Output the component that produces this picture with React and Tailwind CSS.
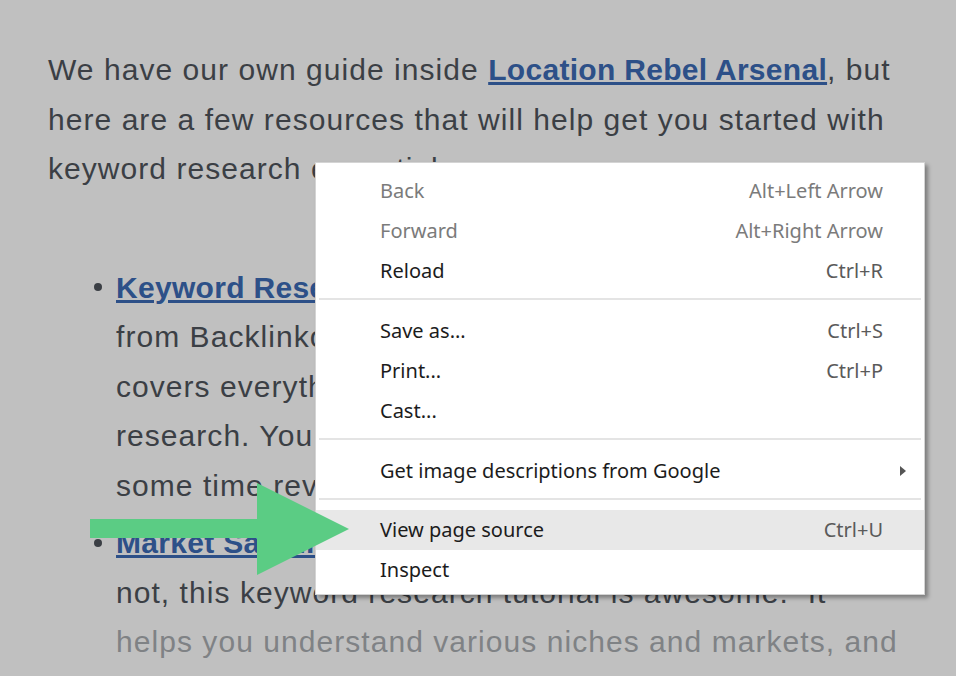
import React from "react";

const body = { fontFamily: '"Liberation Sans", Arial, sans-serif' };
const menuFont = { fontFamily: '"Noto Sans", "Open Sans", sans-serif' };

function Row({ label, shortcut, disabled, highlight, submenu }) {
  return (
    <div
      className={`flex items-center h-[40px] pl-[64px] pr-[41px] ${highlight ? "bg-[#e8e8e8]" : ""}`}
    >
      <span className={`flex-1 ${disabled ? "text-[#7b7b7b]" : "text-[#1c1c1c]"}`}>{label}</span>
      {shortcut && (
        <span className={disabled ? "text-[#7b7b7b]" : "text-[#5a5a5a]"}>{shortcut}</span>
      )}
      {submenu && (
        <svg width="8" height="12" viewBox="0 0 8 12" className="mr-[-24px] ml-2">
          <path d="M1 1 L7 6 L1 11 Z" fill="#555" />
        </svg>
      )}
    </div>
  );
}

function Sep({ h }) {
  return (
    <div className={`${h} flex flex-col`}>
      <div className="mt-[7px] mx-[3px] h-[2px] bg-[#e4e4e4]" />
    </div>
  );
}

function Bullet() {
  return (
    <div className="w-[68px] h-[49.5px] flex items-center justify-end pr-[14px] shrink-0">
      <div className="w-[8px] h-[8px] rounded-full bg-[#3b3f45]" />
    </div>
  );
}

export default function App() {
  return (
    <div className="relative w-[956px] h-[676px] bg-[#c0c0c0] overflow-hidden" style={body}>
      <div className="pl-[48px] pt-[45px] text-[30px] leading-[49.5px] text-[#3b3f45] tracking-[1.05px]">
        <p className="whitespace-pre">
          <span className="block">
            We have our own guide inside{" "}
            <a className="font-bold text-[#2d5088] underline tracking-[0.3px]">Location Rebel Arsenal</a>, but
          </span>
          <span className="block">here are a few resources that will help get you started with</span>
          <span className="block">keyword research essentials:</span>
        </p>
        <ul className="mt-[69px]">
          <li className="flex">
            <Bullet />
            <div className="whitespace-pre">
              <span className="block">
                <a className="font-bold text-[#2d5088] underline tracking-[0.3px]">Keyword Research</a> – The
              </span>
              <span className="block">from Backlinko. This is a huge guide that</span>
              <span className="block">covers everything you need for keyword</span>
              <span className="block">research. You could easily spend quite</span>
              <span className="block">some time reviewing this one.</span>
            </div>
          </li>
          <li className="flex mt-[8px]">
            <Bullet />
            <div className="whitespace-pre">
              <span className="block">
                <a className="font-bold text-[#2d5088] underline tracking-[0.3px]">Market Samurai</a> – Whether you use it
              </span>
              <span className="block">not, this keyword research tutorial is awesome.  It</span>
              <span className="block text-[#7f8285]">helps you understand various niches and markets, and</span>
            </div>
          </li>
        </ul>
      </div>

      {/* context menu */}
      <div
        className="absolute left-[315px] top-[162px] w-[610px] bg-white border border-[#d4d4d4] shadow-[3px_3px_4px_rgba(0,0,0,0.35)] pt-[8px] pb-[4px] text-[20px] leading-none"
        style={menuFont}
      >
        <Row label="Back" shortcut="Alt+Left Arrow" disabled />
        <Row label="Forward" shortcut="Alt+Right Arrow" disabled />
        <Row label="Reload" shortcut="Ctrl+R" />
        <Sep h="h-[20px]" />
        <Row label="Save as..." shortcut="Ctrl+S" />
        <Row label="Print..." shortcut="Ctrl+P" />
        <Row label="Cast..." />
        <Sep h="h-[20px]" />
        <Row label="Get image descriptions from Google" submenu />
        <Sep h="h-[19px]" />
        <Row label="View page source" shortcut="Ctrl+U" highlight />
        <Row label="Inspect" />
      </div>

      {/* green arrow */}
      <svg
        className="absolute left-[90px] top-[483px]"
        width="260"
        height="93"
        viewBox="0 0 260 93"
      >
        <rect x="0" y="36" width="170" height="19" fill="#5bcc84" />
        <polygon points="167,0 259,46 167,92" fill="#5bcc84" />
      </svg>
    </div>
  );
}
